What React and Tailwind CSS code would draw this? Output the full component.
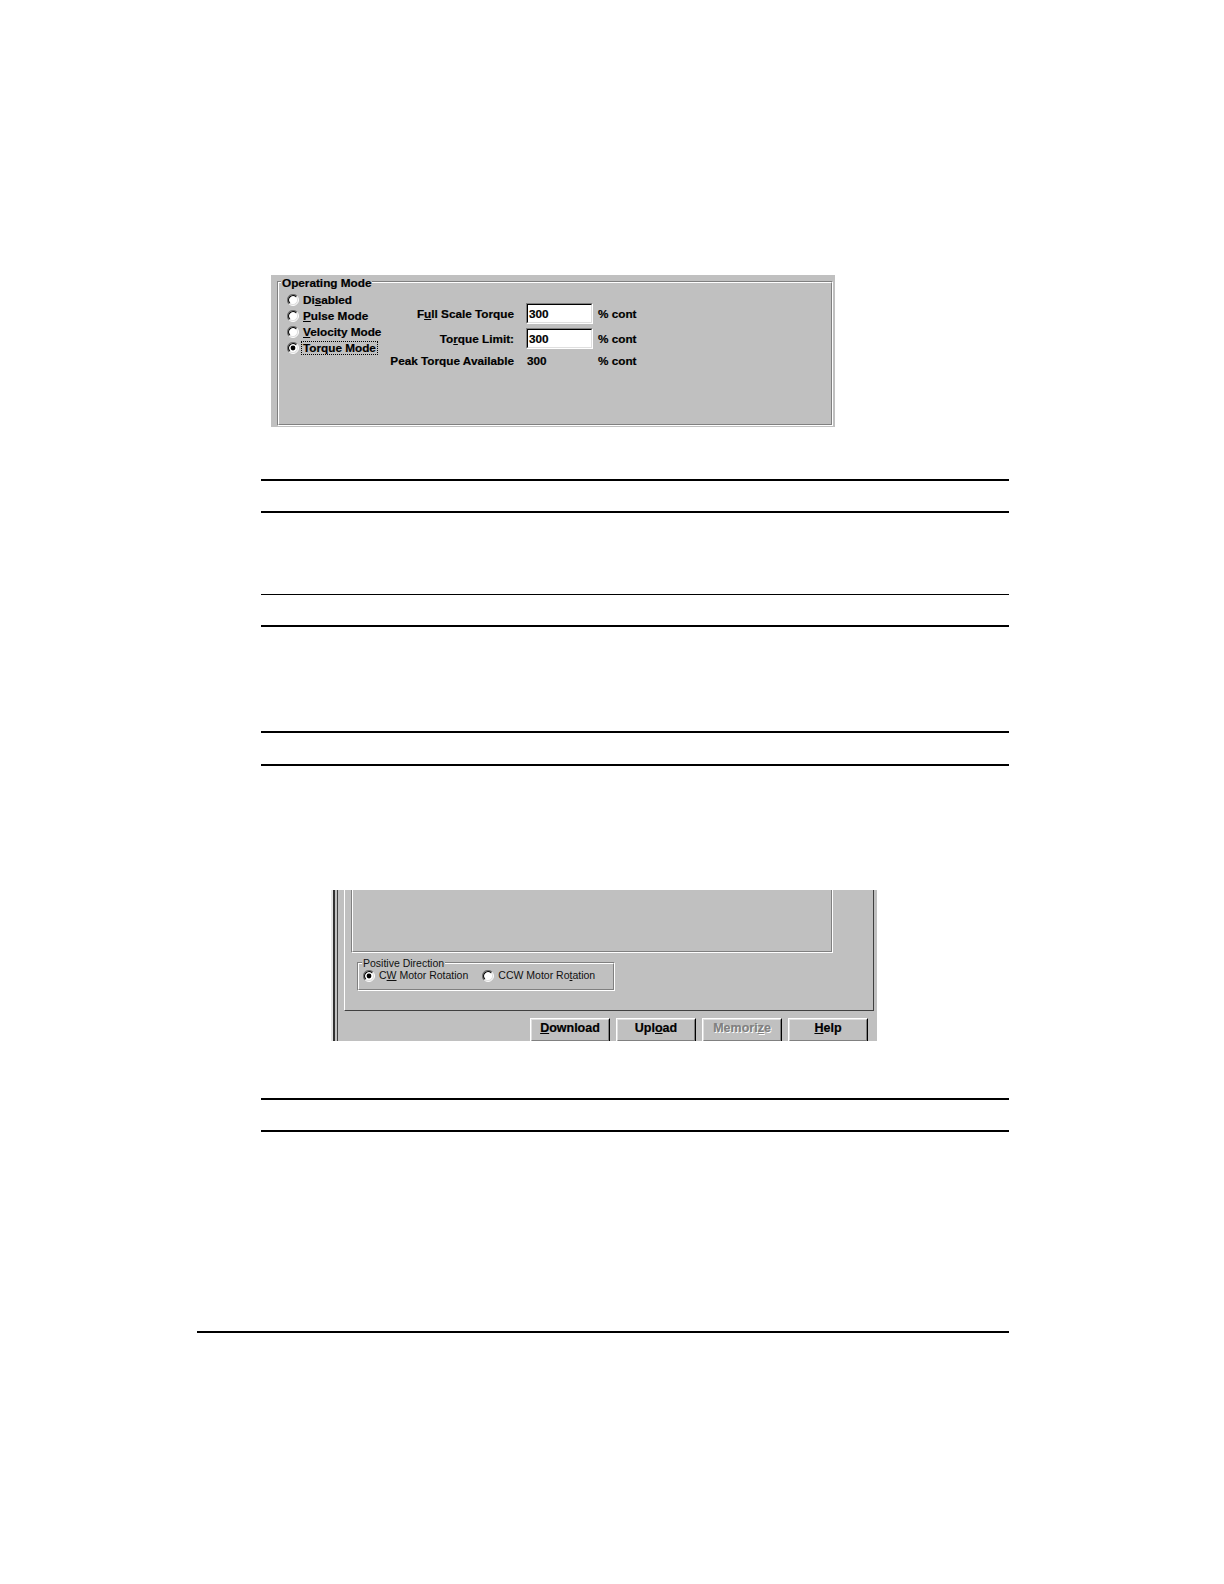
const Radio = ({ checked, size = 12 }) => (
  <svg width={size} height={size} viewBox="0 0 12 12" className="shrink-0">
    <circle cx="6" cy="6" r="5" fill="#fff" />
    <path d="M2.11 9.89A5.5 5.5 0 0 1 9.89 2.11" stroke="#707070" strokeWidth="1.2" fill="none" />
    <path d="M9.89 2.11A5.5 5.5 0 0 1 2.11 9.89" stroke="#fff" fill="none" />
    <path d="M2.82 9.18A4.5 4.5 0 0 1 9.18 2.82" stroke="#000" strokeWidth="1.2" fill="none" />
    <path d="M9.18 2.82A4.5 4.5 0 0 1 2.82 9.18" stroke="#dfdfdf" fill="none" />
    {checked && <circle cx="6" cy="6" r="2.4" fill="#000" />}
  </svg>
);

// Windows style etched group box
function Etched({ className = "", noTop = false, children }) {
  return (
    <div
      className={`relative border border-t-[#808080] border-l-[#808080] border-r-white border-b-white ${
        noTop ? "border-t-0" : ""
      } ${className}`}
    >
      <div
        className={`h-full border border-t-white border-l-white border-r-[#808080] border-b-[#808080] ${
          noTop ? "border-t-0" : ""
        }`}
      >
        {children}
      </div>
    </div>
  );
}

function Field({ value }) {
  return (
    <div className="ml-[12px] w-[67px] h-[21px] border border-t-[#808080] border-l-[#808080] border-r-white border-b-white">
      <div className="h-full border border-t-black border-l-black border-r-[#dfdfdf] border-b-[#dfdfdf] bg-white pl-[1px] leading-[17px]">
        {value}
      </div>
    </div>
  );
}

function Button({ children, disabled }) {
  return (
    <div className="w-[80px] h-[24px] border border-t-white border-l-white border-r-black border-b-black">
      <div
        className={`h-full border border-t-[#dfdfdf] border-l-[#dfdfdf] border-r-[#808080] border-b-[#808080] text-center leading-[17px] font-bold text-[12.5px] ${
          disabled ? "text-[#808080] [text-shadow:1px_1px_0_#fff]" : "text-black"
        }`}
      >
        {children}
      </div>
    </div>
  );
}

const modes = [
  { key: "dis", label: <>Di<u>s</u>abled</> },
  { key: "pulse", label: <><u>P</u>ulse Mode</> },
  { key: "vel", label: <><u>V</u>elocity Mode</> },
  { key: "torque", label: <>Torque Mode</>, checked: true },
];

function Rule({ className = "" }) {
  return <div className={`ml-[261px] w-[748px] h-[2px] bg-black ${className}`} />;
}

export default function App() {
  return (
    <div className="w-[1224px] h-[1584px] bg-white overflow-hidden font-['Liberation_Sans',Arial,sans-serif] text-black">
      {/* Operating mode panel */}
      <div className="mt-[275px] ml-[271px] w-[564px] h-[152px] bg-[#c0c0c0] pt-[6px] pl-[6px] pr-[2px] pb-[1px] text-[11.75px] font-bold [-webkit-text-stroke:0.2px_#000]">
        <Etched className="h-full">
          <span className="absolute left-[3px] top-[-6px] bg-[#c0c0c0] px-[1px] leading-[14px]">
            Operating Mode
          </span>
          <div className="flex items-start">
            <div className="w-[107px] pl-[8px] pt-[9px]">
              {modes.map((m) => (
                <div key={m.key} className="h-[16px] flex items-center">
                  <Radio checked={m.checked} />
                  {m.checked ? (
                    <span className="ml-[2px] inline-block h-[14px] leading-[12px] border border-dotted border-black px-[1px]">
                      {m.label}
                    </span>
                  ) : (
                    <span className="ml-[4px] leading-[16px]">{m.label}</span>
                  )}
                </div>
              ))}
            </div>
            <div className="pt-[20px]">
              <div className="flex items-center h-[21px]">
                <span className="w-[128px] text-right">
                  F<u>u</u>ll Scale Torque
                </span>
                <Field value="300" />
                <span className="ml-[5px]">% cont</span>
              </div>
              <div className="flex items-center h-[21px] mt-[4px]">
                <span className="w-[128px] text-right">
                  To<u>r</u>que Limit:
                </span>
                <Field value="300" />
                <span className="ml-[5px]">% cont</span>
              </div>
              <div className="flex items-center h-[16px] mt-[4px]">
                <span className="w-[128px] text-right whitespace-nowrap">Peak Torque Available</span>
                <span className="ml-[12px] w-[67px] pl-[1px]">300</span>
                <span className="ml-[5px]">% cont</span>
              </div>
            </div>
          </div>
        </Etched>
      </div>

      <Rule className="mt-[52px]" />
      <Rule className="mt-[30px]" />
      <div className="mt-[81px] ml-[261px] w-[748px] h-[1px] bg-black" />
      <Rule className="mt-[30px]" />
      <Rule className="mt-[104px]" />
      <Rule className="mt-[31px]" />

      {/* Bottom dialog crop */}
      <div className="mt-[124px] ml-[331px] w-[546px] h-[151px] bg-[#c0c0c0] flex overflow-hidden text-[10.5px]">
        <div className="w-[2px] bg-[#e4e4e4]" />
        <div className="w-[2px] bg-[#303030]" />
        <div className="w-[2px]" />
        <div className="w-[1px] bg-[#404040]" />
        <div className="flex-1 flex flex-col">
          <div className="ml-[6px] w-[530px] h-[121px] shrink-0 border-l border-l-white border-r border-r-[#404040] border-b border-b-[#404040]">
            <Etched noTop className="ml-[6px] w-[482px] h-[63px]" />
            <Etched className="ml-[12px] mt-[9px] w-[258px] h-[29px]">
              <span className="absolute left-[4px] top-[-6px] bg-[#c0c0c0] px-[1px] leading-[12px] text-[#111]">
                Positive Direction
              </span>
              <div className="flex items-center h-[12px] mt-[6px] pl-[4px] text-[#111]">
                <Radio checked size={12} />
                <span className="ml-[4px]">
                  C<u>W</u> Motor Rotation
                </span>
                <span className="ml-[14px] flex">
                  <Radio size={12} />
                </span>
                <span className="ml-[4px]">
                  CCW Motor Ro<u>t</u>ation
                </span>
              </div>
            </Etched>
          </div>
          <div className="flex-1 flex justify-end items-start gap-[6px] pr-[9px] pt-[7px] [-webkit-text-stroke:0.2px_currentColor]">
            <Button>
              <u>D</u>ownload
            </Button>
            <Button>
              Upl<u>o</u>ad
            </Button>
            <Button disabled>
              Memori<u>z</u>e
            </Button>
            <Button>
              <u>H</u>elp
            </Button>
          </div>
        </div>
      </div>

      <Rule className="mt-[57px]" />
      <Rule className="mt-[30px]" />
      <div className="mt-[199px] ml-[197px] w-[812px] h-[2px] bg-black" />
    </div>
  );
}
